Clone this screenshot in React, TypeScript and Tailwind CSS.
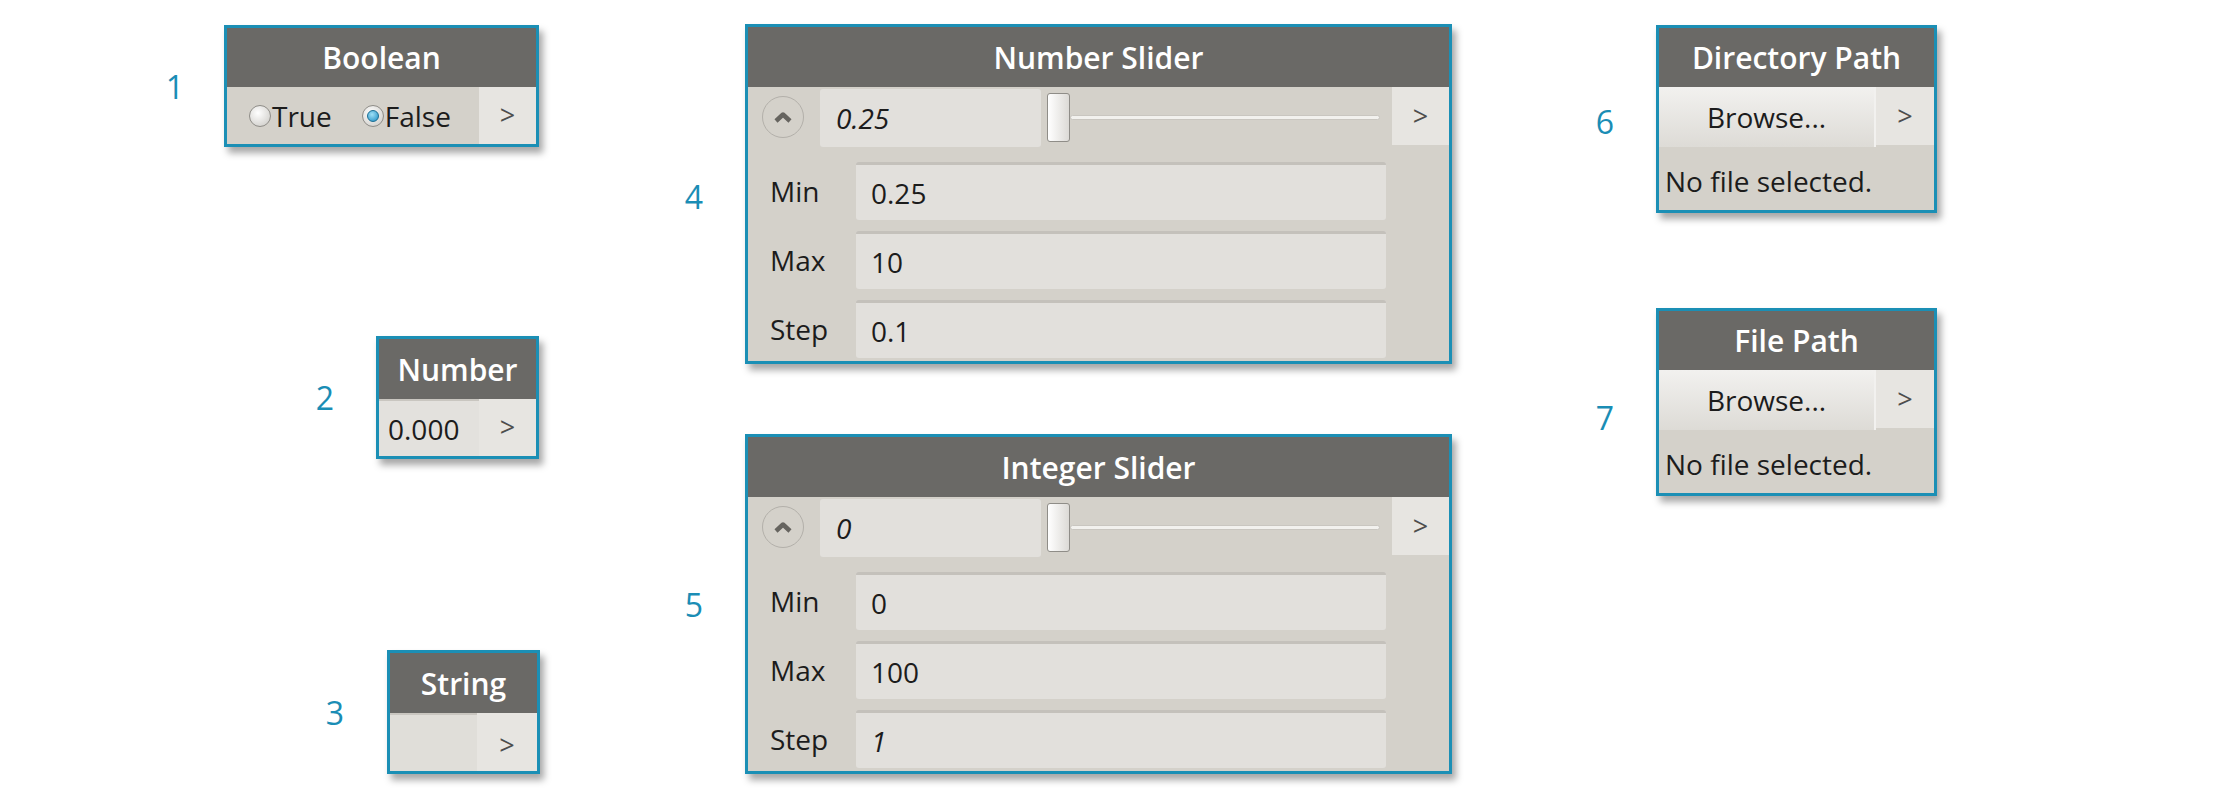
import type { ReactNode } from 'react';

const teal = 'border-[#1b8fb5]';

function Header({ title, h = 'h-[60px]' }: { title: string; h?: string }) {
  return (
    <div
      className={`${h} flex items-center justify-center bg-[#6a6966] text-[30px] font-semibold text-white`}
    >
      {title}
    </div>
  );
}

function Arrow({ className = '' }: { className?: string }) {
  return (
    <div
      className={`flex w-[57px] shrink-0 items-center justify-center bg-[#e7e5e1] text-[27px] text-[#4d4d4d] ${className}`}
    >
      &gt;
    </div>
  );
}

function Radio({ checked }: { checked?: boolean }) {
  return (
    <span className="flex h-[22px] w-[22px] shrink-0 items-center justify-center rounded-full border border-[#8f8d88] bg-[radial-gradient(circle_at_40%_35%,#ffffff,#c9c7c2)]">
      {checked && (
        <span className="h-[12px] w-[12px] rounded-full border border-[#1a6d92] bg-[radial-gradient(circle_at_40%_35%,#9fe0f7,#1d8cc2)]" />
      )}
    </span>
  );
}

function Label({ n, className }: { n: number; className: string }) {
  return (
    <div
      className={`absolute flex h-[40px] w-[40px] items-center justify-center text-[32px] font-normal text-[#1a8db5] ${className}`}
    >
      {n}
    </div>
  );
}

function UpButton() {
  return (
    <div className="ml-[14px] mr-[16px] flex h-[42px] w-[42px] shrink-0 items-center justify-center rounded-full border-[1.5px] border-[#b3b0aa]">
      <svg width="20" height="13" viewBox="0 0 20 13">
        <path d="M3 10 L10 3.5 L17 10" fill="none" stroke="#66645f" strokeWidth="4.5" strokeLinejoin="round" />
      </svg>
    </div>
  );
}

function Field({ label, value, italic }: { label: string; value: string; italic?: boolean }) {
  return (
    <div className="flex h-[58px] items-center">
      <span className="w-[108px] shrink-0 pl-[22px] text-[28px] text-[#1c1c1c]">{label}</span>
      <div
        className={`flex h-full w-[530px] items-center rounded-[3px] border-t-[3px] border-[#c4c1bb] bg-[#e2e0dc] pl-[15px] text-[28px] text-[#1c1c1c] ${italic ? 'italic' : ''}`}
      >
        {value}
      </div>
    </div>
  );
}

function Slider({
  title,
  value,
  min,
  max,
  step,
  stepItalic,
  pos,
}: {
  title: string;
  value: string;
  min: string;
  max: string;
  step: string;
  stepItalic?: boolean;
  pos: string;
}) {
  return (
    <div className={`absolute w-[707px] border-[3px] ${teal} bg-[#d4d1ca] shadow-[4px_6px_7px_rgba(0,0,0,0.35)] ${pos}`}>
      <Header title={title} />
      <div className="flex h-[60px] items-center">
        <UpButton />
        <div className="mt-[2px] flex h-[58px] w-[221px] shrink-0 items-center rounded-[3px] bg-[#e2e0dc] pl-[16px] text-[28px] italic text-[#1c1c1c]">
          {value}
        </div>
        <div className="ml-[6px] flex flex-1 items-center">
          <div className="h-[49px] w-[23px] shrink-0 rounded-[3px] border border-[#8f8d88] bg-[linear-gradient(90deg,#ffffff,#dcdad6)]" />
          <div className="h-[5px] flex-1 rounded-full border border-[#c9c6c0] bg-[#f2f1ee]" />
        </div>
        <Arrow className="ml-[12px] h-[58px] self-start" />
      </div>
      <div className="flex flex-col gap-[11px] pb-[3px] pt-[15px]">
        <Field label="Min" value={min} />
        <Field label="Max" value={max} />
        <Field label="Step" value={step} italic={stepItalic} />
      </div>
    </div>
  );
}

function PathNode({ title, pos }: { title: string; pos: string }) {
  return (
    <div className={`absolute w-[281px] border-[3px] ${teal} bg-[#d4d1ca] shadow-[4px_6px_7px_rgba(0,0,0,0.35)] ${pos}`}>
      <Header title={title} h="h-[59px]" />
      <div className="flex h-[60px]">
        <div className="flex flex-1 items-center justify-center border-r-2 border-[#f2f1ef] bg-[linear-gradient(180deg,#f2f1ef,#dddbd6)] text-[28px] text-[#1c1c1c]">
          Browse...
        </div>
        <Arrow className="h-[58px] w-[58px]" />
      </div>
      <div className="flex h-[63px] items-center pl-[6px] pt-[4px] text-[28px] text-[#1c1c1c]">No file selected.</div>
    </div>
  );
}

function Box({ pos, w, children }: { pos: string; w: string; children: ReactNode }) {
  return (
    <div className={`absolute ${w} border-[3px] ${teal} shadow-[4px_6px_7px_rgba(0,0,0,0.35)] ${pos}`}>{children}</div>
  );
}

export default function App() {
  return (
    <div className="relative h-[802px] w-[2218px] overflow-hidden bg-white font-['Open_Sans',sans-serif]">
      <Label n={1} className="left-[155px] top-[67px]" />
      <Label n={2} className="left-[305px] top-[378px]" />
      <Label n={3} className="left-[315px] top-[693px]" />
      <Label n={4} className="left-[674px] top-[177px]" />
      <Label n={5} className="left-[674px] top-[585px]" />
      <Label n={6} className="left-[1585px] top-[102px]" />
      <Label n={7} className="left-[1585px] top-[398px]" />

      <Box pos="left-[224px] top-[25px]" w="w-[315px]">
        <Header title="Boolean" h="h-[59px]" />
        <div className="flex h-[57px]">
          <div className="flex flex-1 items-center bg-[#d4d1ca] pl-[22px] text-[28px] text-[#1c1c1c]">
            <Radio />
            <span className="ml-[1px]">True</span>
            <span className="ml-[30px]">
              <Radio checked />
            </span>
            <span className="ml-[1px]">False</span>
          </div>
          <Arrow />
        </div>
      </Box>

      <Box pos="left-[376px] top-[336px]" w="w-[163px]">
        <Header title="Number" />
        <div className="flex h-[57px]">
          <div className="flex flex-1 items-center border-t-2 border-[#c9c6c0] bg-[#e3e1dd] pl-[9px] text-[28px] text-[#1c1c1c]">
            0.000
          </div>
          <Arrow />
        </div>
      </Box>

      <Box pos="left-[387px] top-[650px]" w="w-[153px]">
        <Header title="String" />
        <div className="flex h-[58px]">
          <div className="flex-1 border-t-2 border-[#c9c6c0] bg-[#e0ded9]" />
          <Arrow className="w-[60px] pt-[6px]" />
        </div>
      </Box>

      <Slider title="Number Slider" value="0.25" min="0.25" max="10" step="0.1" pos="left-[745px] top-[24px]" />
      <Slider title="Integer Slider" value="0" min="0" max="100" step="1" stepItalic pos="left-[745px] top-[434px]" />

      <PathNode title="Directory Path" pos="left-[1656px] top-[25px]" />
      <PathNode title="File Path" pos="left-[1656px] top-[308px]" />
    </div>
  );
}
